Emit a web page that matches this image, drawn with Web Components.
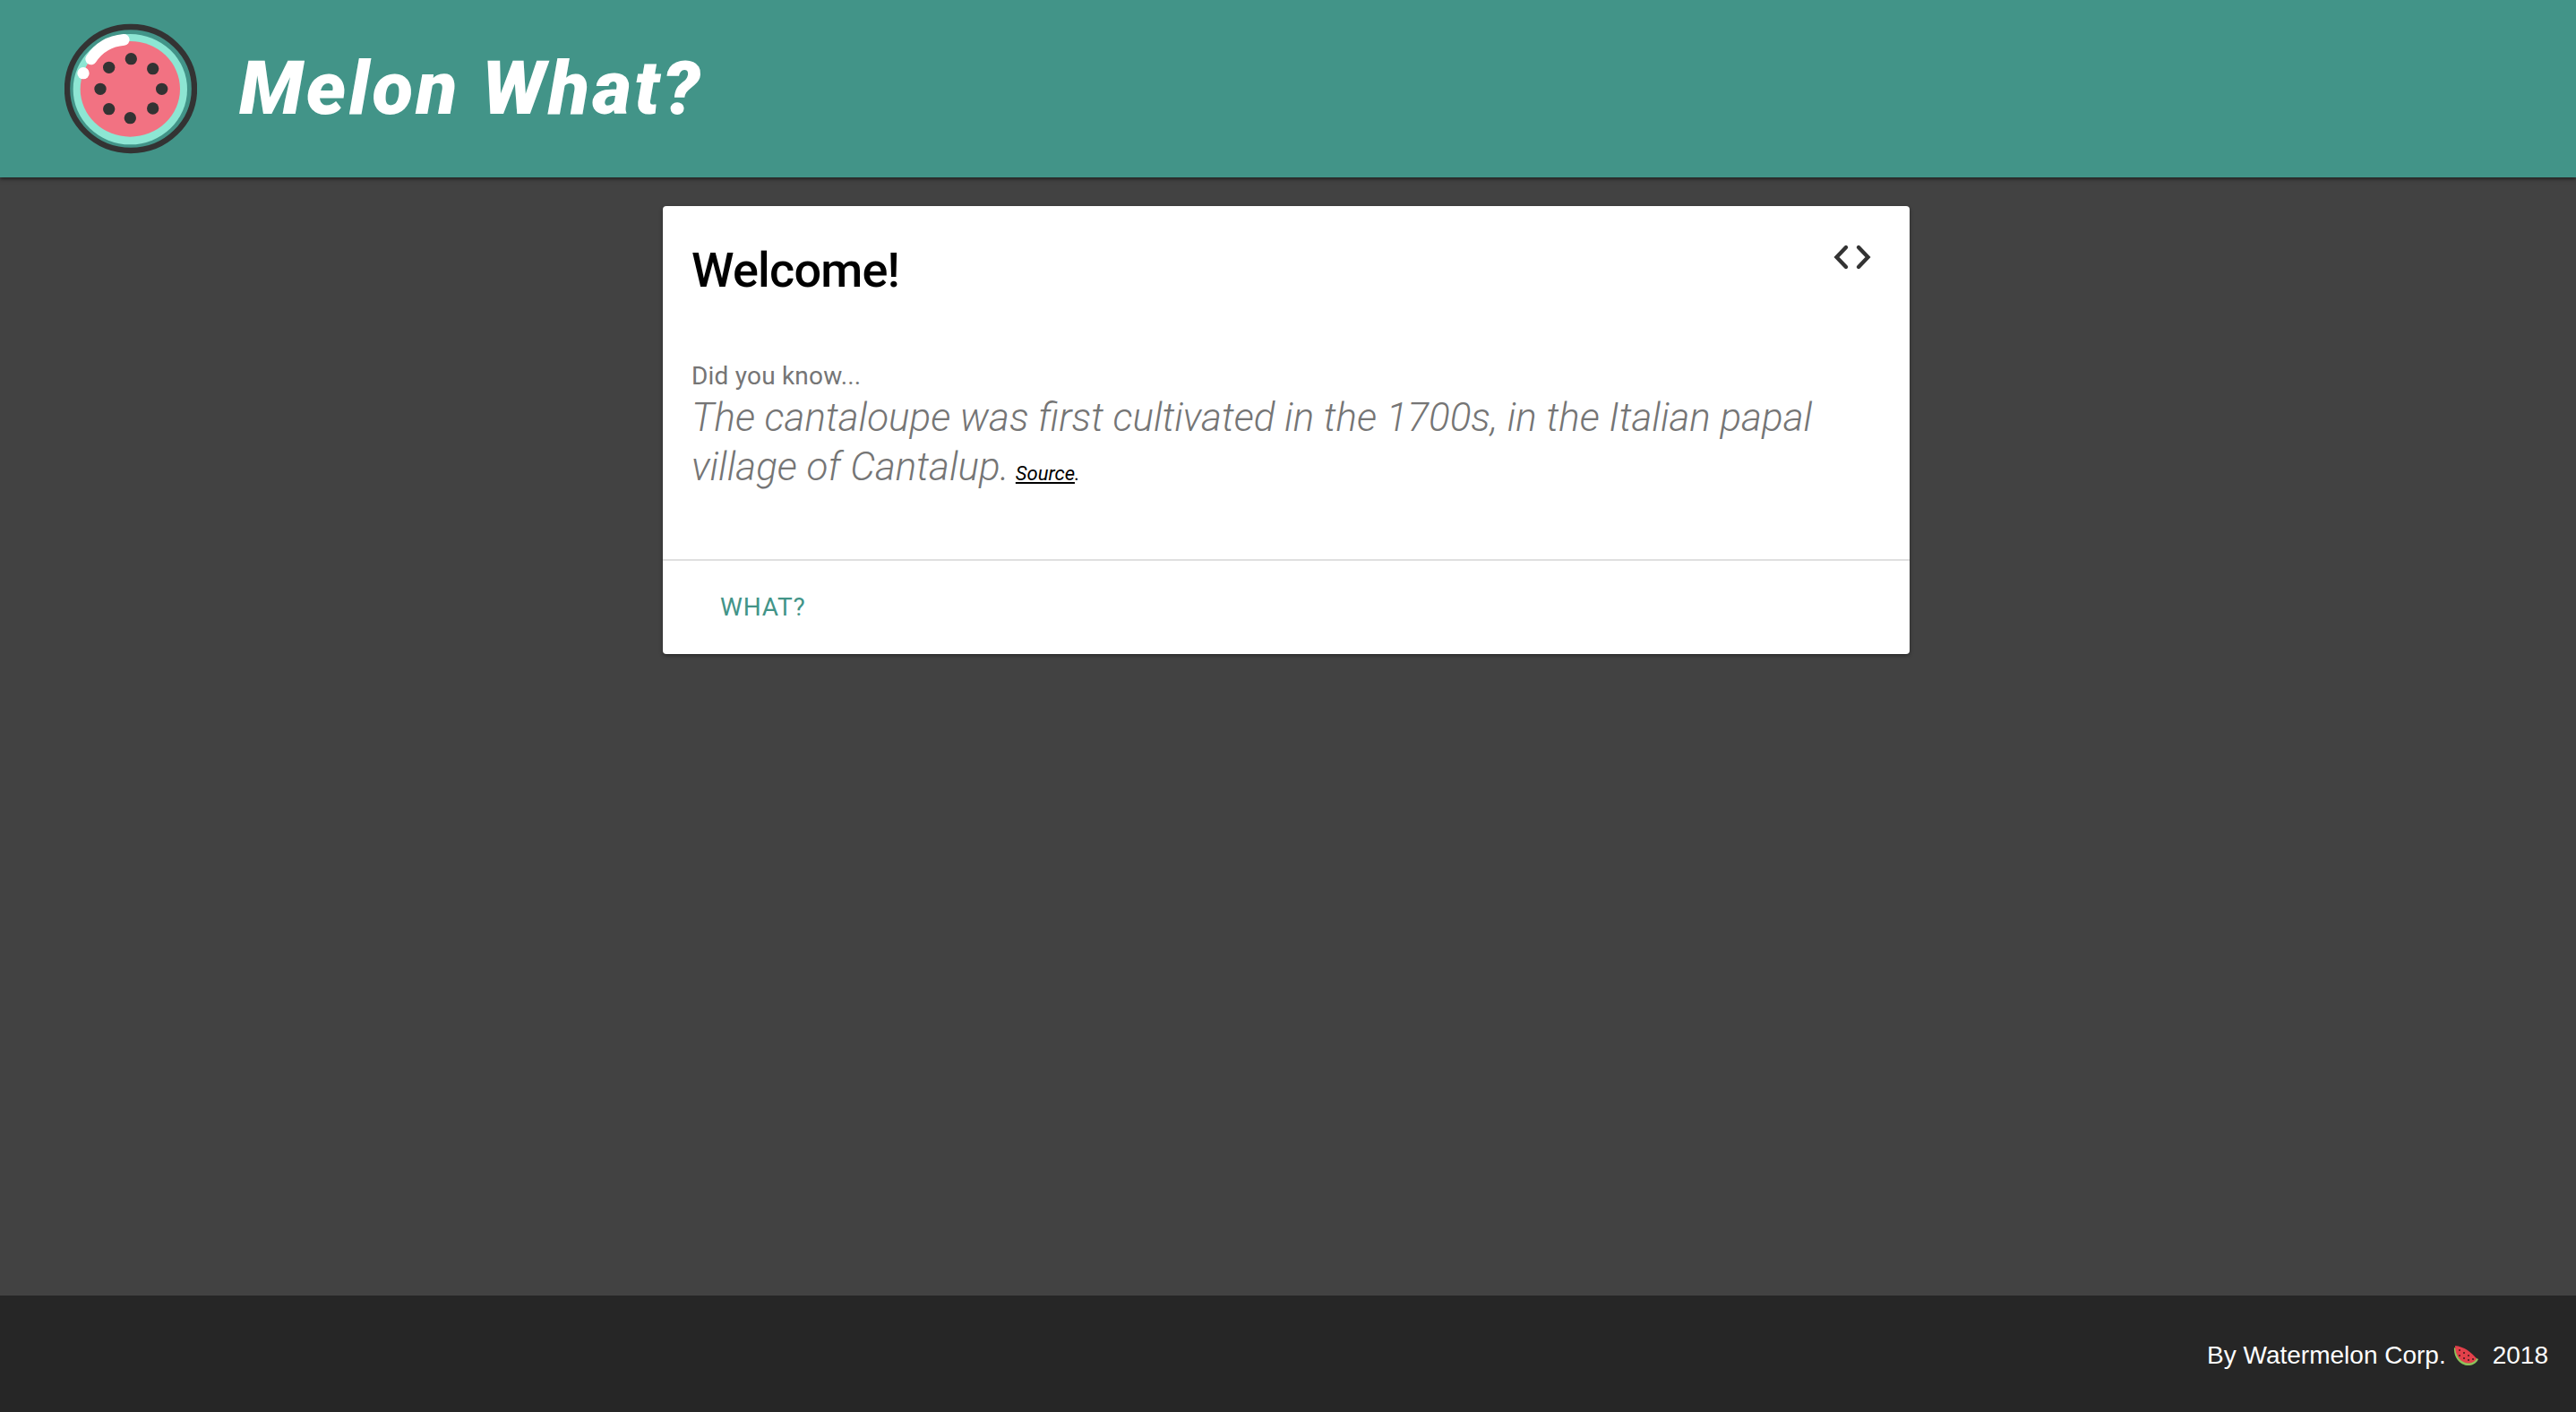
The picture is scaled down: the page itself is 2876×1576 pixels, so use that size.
<!DOCTYPE html>
<html lang="en">
<head>
<meta charset="utf-8">
<title>Melon What?</title>
<style>
  html, body { margin: 0; height: 100%; }
  body {
    display: flex;
    flex-direction: column;
    min-height: 100vh;
    background: #424242;
    font-family: "Liberation Sans", Arial, sans-serif;
  }
  main { flex: 1; display: flex; justify-content: center; align-items: flex-start; padding: 32px 4px 0 0; }
  melon-fact a { color: #000; }
</style>
</head>
<body>
<melon-header>Melon What?</melon-header>
<main>
  <melon-card>
    <span slot="title">Welcome!</span>
    <melon-fact><span slot="lead">Did you know...</span><span>The cantaloupe was first cultivated in the 1700s, in the Italian papal village of Cantalup.</span><small slot="source"><a href="#">Source</a>.</small></melon-fact>
    <span slot="action">WHAT?</span>
  </melon-card>
</main>
<melon-footer></melon-footer>

<script>
const HEADING_FONT = '"Roboto", "Open Sans", sans-serif';

class MelonLogo extends HTMLElement {
  constructor() {
    super();
    this.attachShadow({ mode: 'open' });
    const dots = [[319,194],[392,227],[422,295],[392,360],[316,392],[245,362],[216,295],[245,223]]
      .map(([x, y]) => `<circle cx="${x}" cy="${y}" r="20"/>`).join('');
    this.shadowRoot.innerHTML = `
      <style>
        :host { display: block; width: 148px; height: 148px; }
        svg { display: block; width: 100%; height: 100%; }
      </style>
      <svg viewBox="96 72 444 444" aria-hidden="true">
        <ellipse cx="318" cy="294" rx="213" ry="207" fill="none" stroke="#333" stroke-width="19"/>
        <ellipse cx="316" cy="296" rx="191" ry="185" fill="#8de6d3"/>
        <ellipse cx="316" cy="295" rx="167" ry="160" fill="#f27282"/>
        <g fill="#333">${dots}</g>
        <path d="M185 195 C212 153 250 134 295 130" fill="none" stroke="#fff" stroke-width="38" stroke-linecap="round"/>
        <circle cx="159" cy="242" r="20" fill="#fff"/>
      </svg>
    `;
  }
}
customElements.define('melon-logo', MelonLogo);

class MelonHeader extends HTMLElement {
  constructor() {
    super();
    this.attachShadow({ mode: 'open' });
    this.shadowRoot.innerHTML = `
      <style>
        :host {
          display: flex;
          align-items: center;
          gap: 47px;
          height: 198px;
          padding-left: 72px;
          box-sizing: border-box;
          background: #429488;
          box-shadow: 0 2px 4px rgba(0, 0, 0, .5);
          position: relative;
          color: #fff;
        }
        h1 {
          margin: 0;
          font: italic 900 84px/1 ${HEADING_FONT};
          letter-spacing: 3.4px;
        }
      </style>
      <melon-logo></melon-logo>
      <h1><slot></slot></h1>
    `;
  }
}
customElements.define('melon-header', MelonHeader);

class MelonCard extends HTMLElement {
  constructor() {
    super();
    this.attachShadow({ mode: 'open' });
    this.shadowRoot.innerHTML = `
      <style>
        :host {
          display: block;
          width: 1392px;
          background: #fff;
          border-radius: 4px;
          box-shadow: 0 2px 4px rgba(0, 0, 0, .35);
        }
        .top {
          display: flex;
          justify-content: space-between;
          align-items: flex-start;
          padding: 39px 40px 0 32px;
        }
        h2 {
          margin: 0;
          font: 500 54px/66px ${HEADING_FONT};
          letter-spacing: -.8px;
          color: #000;
        }
        .toggle { display: block; width: 48px; height: 48px; }
        .body { padding: 66px 32px 68px; }
        .actions {
          border-top: 2px solid #e0e0e0;
          padding: 0 32px;
          height: 104px;
          display: flex;
          align-items: center;
        }
        .button {
          padding: 0 32px;
          font: 400 28px/36px "Roboto", sans-serif;
          letter-spacing: .8px;
          color: #429488;
        }
      </style>
      <div class="top">
        <h2><slot name="title"></slot></h2>
        <svg class="toggle" viewBox="0 0 48 48" aria-hidden="true">
          <path d="M17 7 L6.500 18 L17 29 M31 7 L41.500 18 L31 29" fill="none" stroke="#333" stroke-width="4.400" stroke-linecap="round" stroke-linejoin="miter"/>
        </svg>
      </div>
      <div class="body"><slot></slot></div>
      <div class="actions"><span class="button"><slot name="action"></slot></span></div>
    `;
  }
}
customElements.define('melon-card', MelonCard);

class MelonFact extends HTMLElement {
  constructor() {
    super();
    this.attachShadow({ mode: 'open' });
    this.shadowRoot.innerHTML = `
      <style>
        :host { display: block; color: #757575; font-family: ${HEADING_FONT}; }
        .lead { display: block; font-size: 28px; line-height: 38px; letter-spacing: .2px; }
        .text { font-style: italic; font-weight: 300; font-size: 44px; line-height: 55px; }
        ::slotted(small) { font-size: 22px; font-weight: 400; color: #000; margin-left: 7px; }
      </style>
      <slot name="lead" class="lead"></slot>
      <div class="text"><slot></slot><slot name="source"></slot></div>
    `;
  }
}
customElements.define('melon-fact', MelonFact);

class MelonFooter extends HTMLElement {
  constructor() {
    super();
    this.attachShadow({ mode: 'open' });
    this.shadowRoot.innerHTML = `
      <style>
        :host {
          display: flex;
          justify-content: flex-end;
          align-items: center;
          height: 130px;
          padding: 3px 31px 0 0;
          box-sizing: border-box;
          background: #262626;
          color: #fff;
          font: 28px/36px "Liberation Sans", Arial, sans-serif;
        }
        svg { width: 28px; height: 24px; margin: 0 16px 0 8px; }
      </style>
      <span>By Watermelon Corp.</span>
      <svg viewBox="0 0 28 24" aria-hidden="true">
        <path d="M1 3 C0 14 8 24 18 23 C23 22.500 26 20 28 16 Z" fill="#8cc25c"/>
        <path d="M2 1 C2 13 9 21 18 20.500 C22 20.300 24.500 18 26 15.500 C20 8 12 2 2 1 Z" fill="#e2404a"/>
        <g fill="#3a1a1a">
          <circle cx="7" cy="6" r="1"/><circle cx="12" cy="9" r="1"/><circle cx="17" cy="12" r="1"/><circle cx="22" cy="16" r="1"/>
          <circle cx="7" cy="12" r="1"/><circle cx="12" cy="15" r="1"/><circle cx="17" cy="17" r="1"/>
        </g>
      </svg>
      <span>2018</span>
    `;
  }
}
customElements.define('melon-footer', MelonFooter);
</script>
</body>
</html>
